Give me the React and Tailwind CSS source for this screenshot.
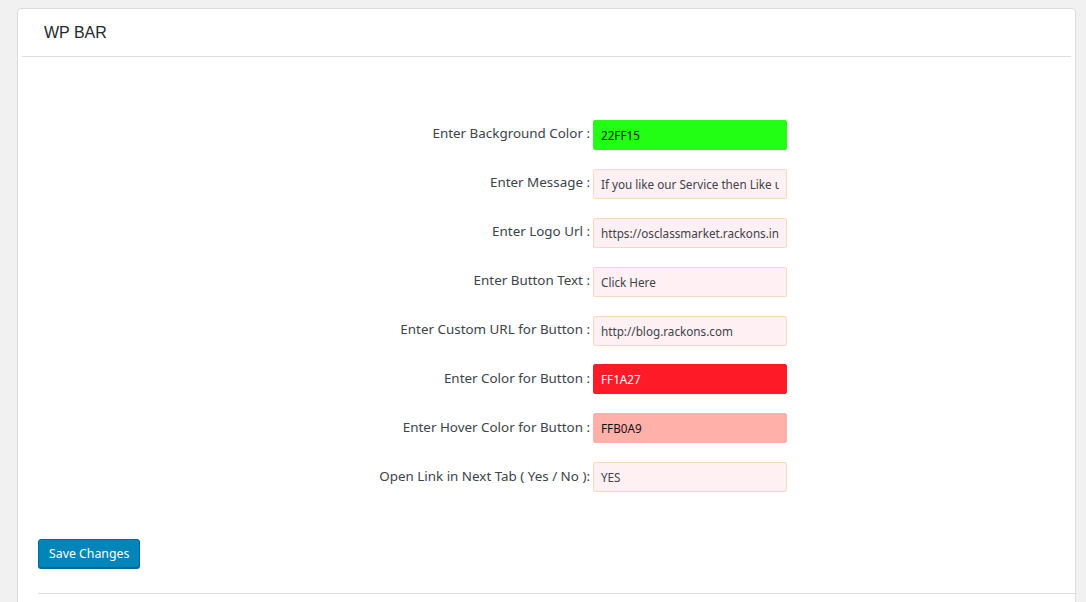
const fields = [
  { label: "Enter Background Color :", value: "22FF15", cls: "bg-[#22ff15] border-[#22ff15] text-[#111]" },
  { label: "Enter Message :", value: "If you like our Service then Like us on Facebook", cls: "bg-[#fff0f3] border-[#fad9bd] text-[#3c434a]" },
  { label: "Enter Logo Url :", value: "https://osclassmarket.rackons.in/logo.png", cls: "bg-[#fff0f3] border-[#fad9bd] text-[#3c434a]" },
  { label: "Enter Button Text :", value: "Click Here", cls: "bg-[#fff0f3] border-[#fad9bd] text-[#3c434a]" },
  { label: "Enter Custom URL for Button :", value: "http://blog.rackons.com", cls: "bg-[#fff0f3] border-[#fad9bd] text-[#3c434a]" },
  { label: "Enter Color for Button :", value: "FF1A27", cls: "bg-[#ff1a27] border-[#ff1a27] text-white" },
  { label: "Enter Hover Color for Button :", value: "FFB0A9", cls: "bg-[#ffb0a9] border-[#ffb0a9] text-[#111]" },
  { label: "Open Link in Next Tab ( Yes / No ):", value: "YES", cls: "bg-[#fff0f3] border-[#fad9bd] text-[#3c434a]" },
];

export default function App() {
  return (
    <div className="min-h-[602px] bg-[#f1f1f1] pt-[8px] pl-[17px] pr-[10px] overflow-hidden">
      <div className="w-[1059px] h-[620px] bg-white border border-[#dcdcdc] rounded-[4px] shadow-[0_1px_1px_rgba(0,0,0,0.04)]">
        <div className="h-[47px] flex items-center pl-[26px]">
          <h1 className="text-[16px] text-[#23282d] font-['Liberation_Sans',Arial,sans-serif]">WP BAR</h1>
        </div>
        <div className="mx-[4px] h-px bg-[#dddddd]" />

        <div className="pt-[63px] flex flex-col gap-[18.9px] font-['Noto_Sans','Open_Sans',sans-serif]">
          {fields.map((f) => (
            <div key={f.label} className="flex items-center">
              <label className="w-[575px] text-right text-[13.4px] text-[#3c434a] pr-[3px] pb-[3px] whitespace-nowrap">
                {f.label}
              </label>
              <input
                readOnly
                value={f.value}
                className={`w-[194px] h-[30px] border rounded-[2px] px-[7px] text-[11.7px] outline-none font-['Noto_Sans','Open_Sans',sans-serif] ${f.cls}`}
              />
            </div>
          ))}
        </div>

        <div className="pl-[20px] pt-[47px]">
          <button className="h-[29px] px-[10px] bg-[#0085ba] border border-[#006799] rounded-[3px] text-white text-[12.3px] shadow-[0_1px_0_#006799] font-['Noto_Sans','Open_Sans',sans-serif]">
            Save Changes
          </button>
        </div>
        <div className="ml-[20px] mt-[25px] h-px bg-[#dddddd]" />
      </div>
    </div>
  );
}
